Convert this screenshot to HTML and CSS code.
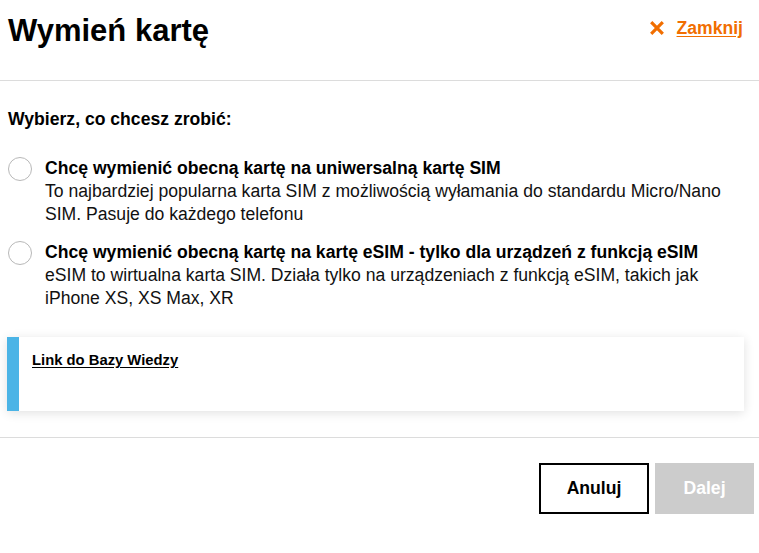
FILE: index.html
```html
<!DOCTYPE html>
<html lang="pl">
<head>
<meta charset="utf-8">
<title>Wymień kartę</title>
<link rel="stylesheet" href="styles.css">
</head>
<body>
<div class="modal">
  <header class="head">
    <h1 class="title">Wymień kartę</h1>
    <a class="close" href="#">
      <svg class="close-icon" viewBox="0 0 14 14" width="14" height="14"><path d="M1.2 1.2 L12.8 12.8 M12.8 1.2 L1.2 12.8" stroke="#f16e00" stroke-width="3.2" stroke-linecap="butt" fill="none"/></svg>
      <span class="close-text">Zamknij</span>
    </a>
  </header>
  <main class="content">
    <p class="question">Wybierz, co chcesz zrobić:</p>
    <label class="option">
      <span class="radio"></span>
      <span class="option-body">
        <span class="option-title">Chcę wymienić obecną kartę na uniwersalną kartę SIM</span>
        <span class="option-desc">To najbardziej popularna karta SIM z możliwością wyłamania do standardu Micro/Nano SIM. Pasuje do każdego telefonu</span>
      </span>
    </label>
    <label class="option">
      <span class="radio"></span>
      <span class="option-body">
        <span class="option-title">Chcę wymienić obecną kartę na kartę eSIM - tylko dla urządzeń z funkcją eSIM</span>
        <span class="option-desc">eSIM to wirtualna karta SIM. Działa tylko na urządzeniach z funkcją eSIM, takich jak iPhone XS, XS Max, XR</span>
      </span>
    </label>
    <div class="info">
      <a class="info-link" href="#">Link do Bazy Wiedzy</a>
    </div>
  </main>
  <footer class="foot">
    <button class="btn btn-cancel">Anuluj</button>
    <button class="btn btn-next" disabled>Dalej</button>
  </footer>
</div>
</body>
</html>
```
FILE: styles.css
```css
* { box-sizing: border-box; }
html, body { margin: 0; padding: 0; background: #fff; }
body {
  font-family: "Liberation Sans", Arial, Helvetica, sans-serif;
  color: #000;
  width: 759px;
}
.head {
  height: 81px;
  border-bottom: 1px solid #dcdcdc;
  display: flex;
  justify-content: space-between;
  align-items: flex-start;
  padding: 0 16px 0 8px;
}
.title {
  margin: 13px 0 0;
  font-size: 31px;
  font-weight: bold;
  line-height: 36px;
  letter-spacing: 0;
}
.close {
  margin-top: 18px;
  display: flex;
  align-items: center;
  gap: 13px;
  color: #f16e00;
  text-decoration: none;
}
.close-icon { display: block; }
.close-text {
  font-size: 17.6px;
  font-weight: bold;
  text-decoration: underline;
  text-underline-offset: 2px;
  line-height: 20px;
}
.content {
  padding: 27px 0 0;
}
.question {
  margin: 0 0 0 8px;
  font-size: 17.6px;
  font-weight: bold;
  line-height: 23px;
}
.option {
  display: flex;
  gap: 13px;
  padding-left: 8px;
  margin-top: 26px;
}
.option + .option { margin-top: 15px; }
.radio {
  flex: none;
  width: 24px;
  height: 24px;
  border: 1px solid #b8b8b8;
  border-radius: 50%;
  margin-top: 0;
}
.option-body {
  display: flex;
  flex-direction: column;
  font-size: 17.6px;
  line-height: 23px;
}
.option-title {
  font-weight: bold;
}
.option-desc {
  color: #111;
  max-width: 690px;
}
.info {
  margin: 27px 15px 0 7px;
  height: 74px;
  border-left: 12px solid #4bb4e6;
  background: #fff;
  box-shadow: 0 2px 10px rgba(0,0,0,0.12);
  padding: 14px 13px;
  line-height: 17px;
}
.info-link {
  color: #000;
  font-size: 14.8px;
  font-weight: bold;
  text-decoration: underline;
  text-underline-offset: 2px;
}
.foot {
  margin-top: 26px;
  border-top: 1px solid #dcdcdc;
  display: flex;
  justify-content: flex-end;
  gap: 6px;
  padding: 25px 5px 0 0;
}
.btn {
  font-family: inherit;
  font-size: 17.6px;
  font-weight: bold;
  height: 51px;
  border-radius: 0;
  cursor: pointer;
}
.btn-cancel {
  width: 110px;
  border: 2px solid #000;
  background: #fff;
  color: #000;
}
.btn-next {
  width: 99px;
  border: none;
  background: #cccccc;
  color: #fff;
}
```
